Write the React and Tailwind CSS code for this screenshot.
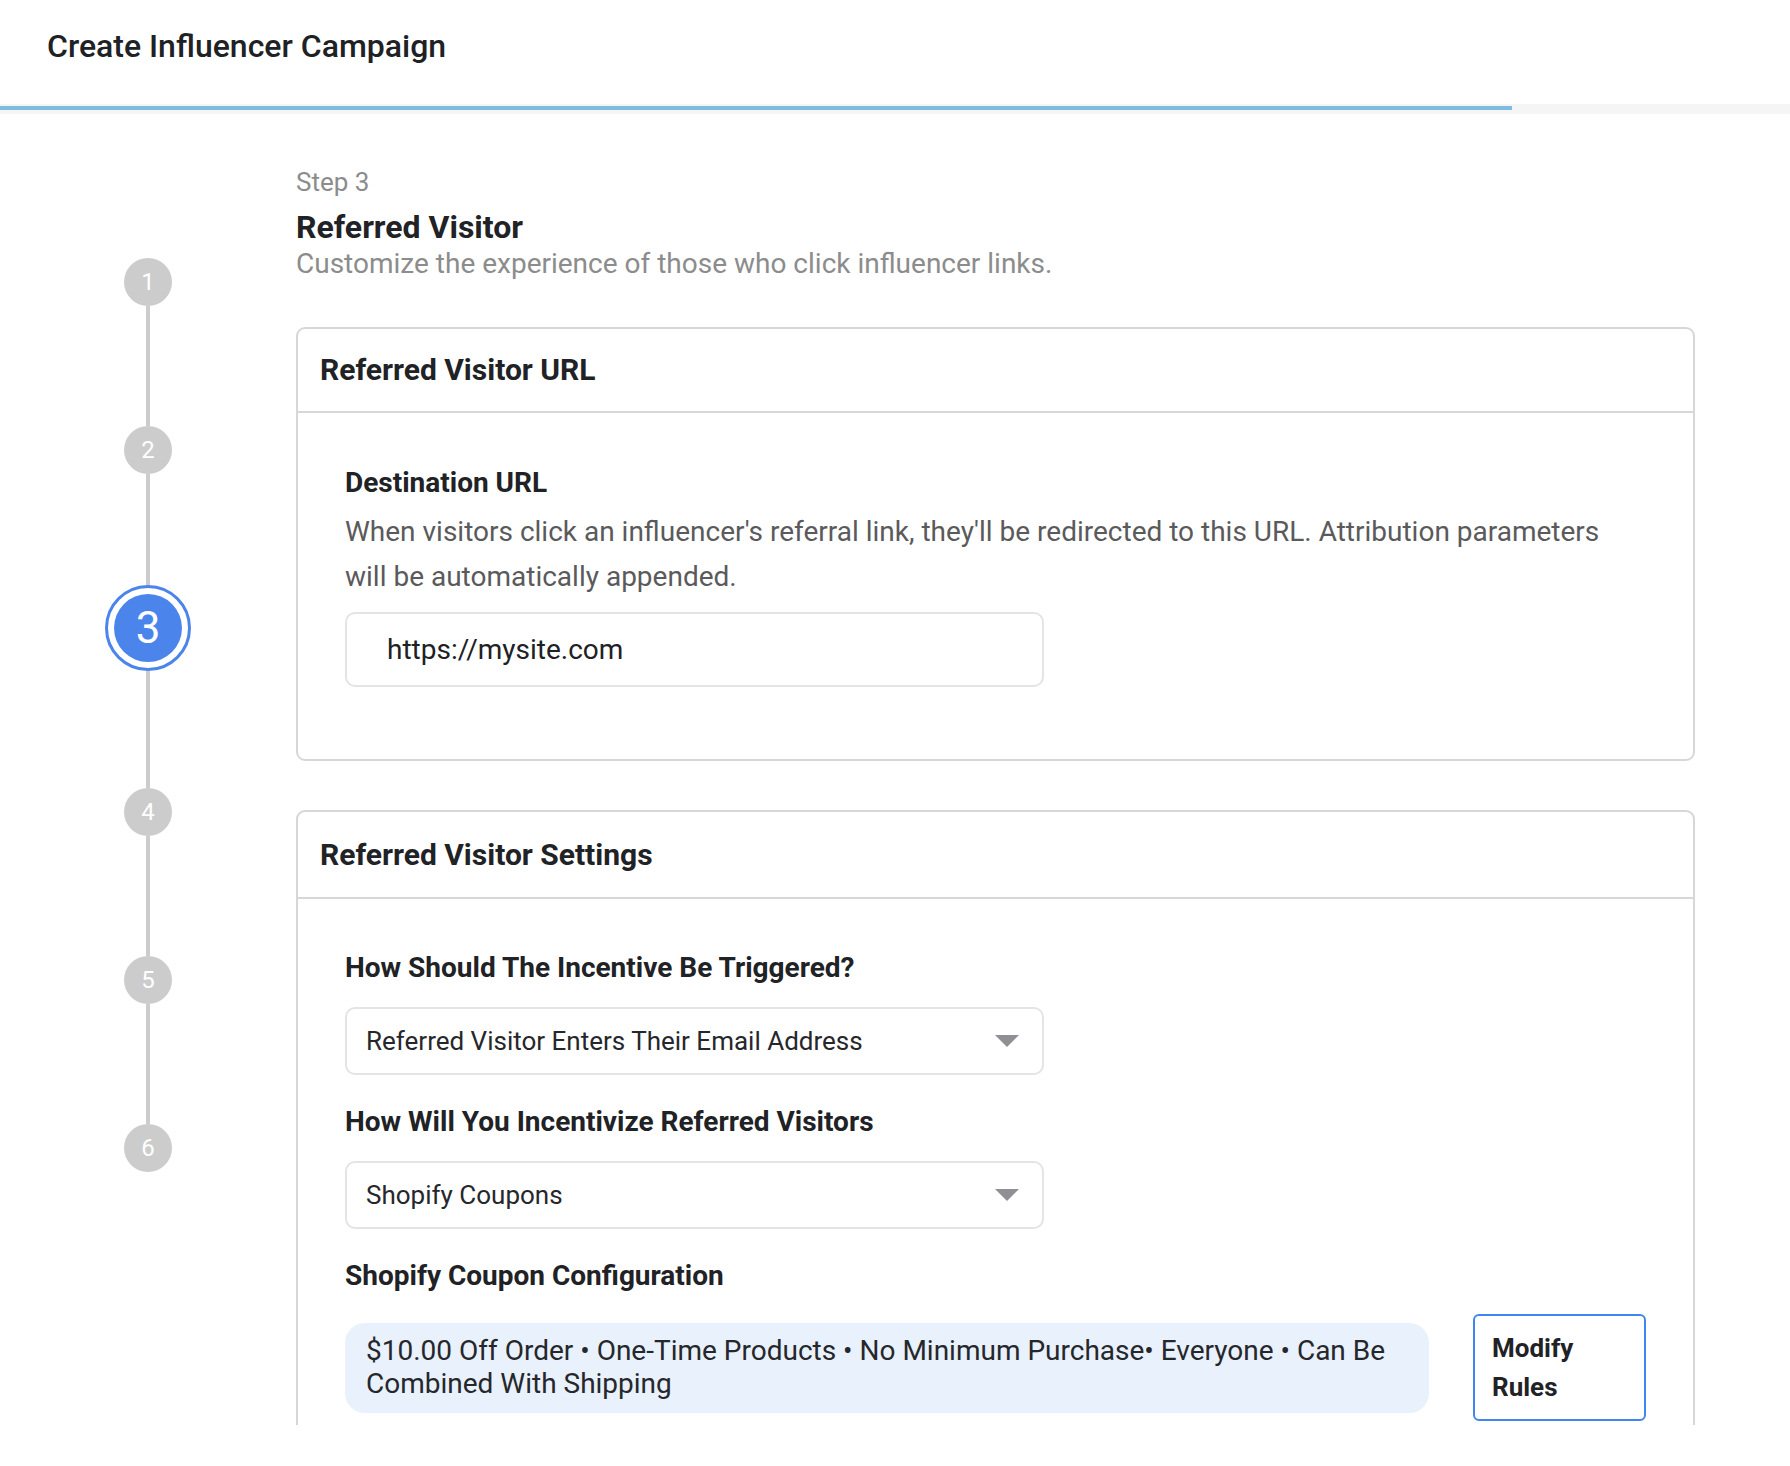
import React from 'react';

const steps = [1, 2, 3, 4, 5, 6];
// line lengths under each circle, in px
const lineHeights = ['h-[120px]', 'h-[111px]', 'h-[117px]', 'h-[120px]', 'h-[120px]'];

const Stepper = ({ active }) => (
    <div className="w-[296px] shrink-0 flex flex-col items-center pt-[144px]">
        {steps.map((n, i) => (
            <React.Fragment key={n}>
                {n === active ? (
                    <div className="w-[86px] h-[86px] rounded-full border-[3px] border-[#4b85ec] flex items-center justify-center">
                        <div className="w-[68px] h-[68px] rounded-full bg-[#4b85ec] flex items-center justify-center text-white text-[44px] leading-none">
                            {n}
                        </div>
                    </div>
                ) : (
                    <div className="w-[48px] h-[48px] rounded-full bg-[#cccccc] flex items-center justify-center text-white text-[24px] leading-none">
                        {n}
                    </div>
                )}
                {i < steps.length - 1 && <div className={`w-[4px] bg-[#cccccc] ${lineHeights[i]}`}></div>}
            </React.Fragment>
        ))}
    </div>
);

const Card = ({ title, children, className = '', headerClass = 'h-[84px]' }) => (
    <div className={`border-2 border-[#d7d7da] rounded-[9px] ${className}`}>
        <div className={`${headerClass} flex items-center pl-[22px] border-b-2 border-[#d7d7da]`}>
            <h3 className="text-[30px] leading-[34px] font-bold text-[#212226]">{title}</h3>
        </div>
        {children}
    </div>
);

const Label = ({ children }) => (
    <p className="text-[28px] leading-[34px] font-bold text-[#212226]">{children}</p>
);

const Select = ({ value }) => (
    <div className="w-[699px] h-[68px] border-2 border-[#e4e4e4] rounded-[10px] flex items-center justify-between pl-[19px] pr-[23px]">
        <span className="text-[26px] text-[#26272b]">{value}</span>
        <svg width="24" height="12" viewBox="0 0 24 12">
            <path d="M0 0 L24 0 L12 12 Z" fill="#8f8f94" />
        </svg>
    </div>
);

const App = () => {
    return (
        <div className="w-full h-[1466px] bg-white font-['Roboto','Liberation_Sans',sans-serif] overflow-hidden">
            {/* Header */}
            <div className="h-[104px] pl-[47px] pt-[26px]">
                <h1 className="text-[32px] leading-[40px] font-medium text-[#202124]">Create Influencer Campaign</h1>
            </div>
            <div className="h-[10px] bg-[#f5f5f5] pt-[2px]">
                <div className="h-[4px] w-[1512px] bg-[#7cbde0]"></div>
            </div>

            <div className="flex h-[1311px] overflow-hidden">
                <Stepper active={3} />

                <div className="flex-1 pr-[95px] pt-[53px]">
                    <p className="text-[26px] leading-[30px] text-[#8c8c8c]">Step 3</p>
                    <h2 className="mt-[12px] text-[32px] leading-[36px] font-bold text-[#212226]">Referred Visitor</h2>
                    <p className="mt-[4px] text-[28px] leading-[30px] text-[#8c8c8c]">
                        Customize the experience of those who click influencer links.
                    </p>

                    <Card title="Referred Visitor URL" className="mt-[48px]">
                        <div className="px-[47px] pt-[53px] pb-[72px]">
                            <Label>Destination URL</Label>
                            <p className="mt-[9px] text-[28px] leading-[45px] text-[#5a5a5c]">
                                When visitors click an influencer's referral link, they'll be redirected to this URL. Attribution parameters will be automatically appended.
                            </p>
                            <div className="mt-[13px] w-[699px] h-[75px] border-2 border-[#e4e4e4] rounded-[10px] flex items-center pl-[40px]">
                                <span className="text-[28px] text-[#202124]">https://mysite.com</span>
                            </div>
                        </div>
                    </Card>

                    <Card title="Referred Visitor Settings" className="mt-[49px]" headerClass="h-[87px]">
                        <div className="px-[47px] pt-[52px] pb-[40px]">
                            <Label>How Should The Incentive Be Triggered?</Label>
                            <div className="mt-[22px]">
                                <Select value="Referred Visitor Enters Their Email Address" />
                            </div>
                            <div className="mt-[30px]">
                                <Label>How Will You Incentivize Referred Visitors</Label>
                            </div>
                            <div className="mt-[22px]">
                                <Select value="Shopify Coupons" />
                            </div>
                            <div className="mt-[30px]">
                                <Label>Shopify Coupon Configuration</Label>
                            </div>
                            <div className="mt-[21px] flex items-center gap-[44px]">
                                <div className="flex-1 bg-[#e8f1fc] rounded-[20px] pl-[21px] pr-[16px] pt-[11px] pb-[13px] min-h-[90px]">
                                    <p className="text-[28px] leading-[33px] text-[#26272b]">
                                        $10.00 Off Order • One-Time Products • No Minimum Purchase• Everyone • Can Be Combined With Shipping
                                    </p>
                                </div>
                                <button className="w-[173px] h-[107px] shrink-0 border-2 border-[#3f86ef] rounded-[6px] text-left pl-[17px] pr-[10px]">
                                    <span className="block text-[26px] leading-[39px] font-bold text-[#212226]">Modify Rules</span>
                                </button>
                            </div>
                        </div>
                    </Card>
                </div>
            </div>
        </div>
    );
};

export default App;
